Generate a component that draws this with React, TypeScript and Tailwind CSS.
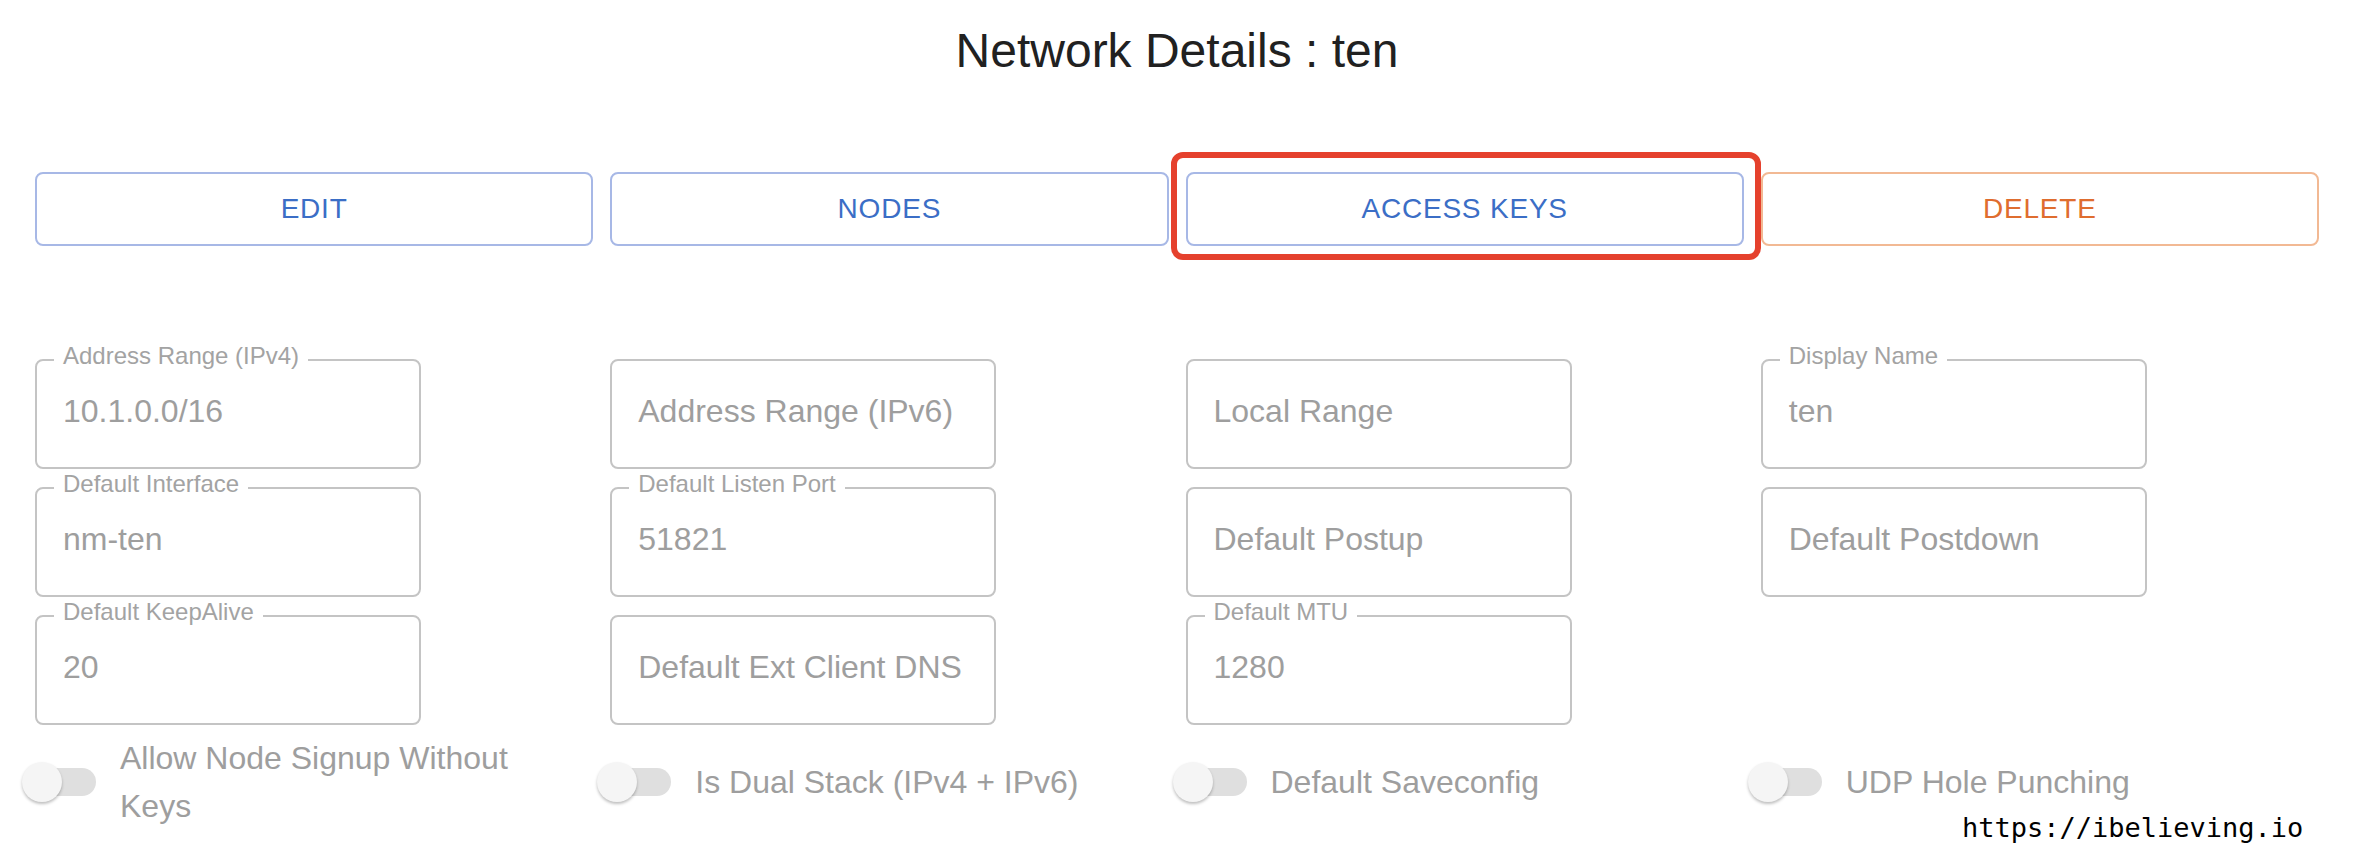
import React from 'react';

type FieldProps = {
  label?: string;
  value?: string;
  placeholder?: string;
};

const Field: React.FC<FieldProps> = ({ label, value, placeholder }) => {
  return (
    <div className="relative w-[386px] h-[110px] rounded-[8px] border-2 border-[#c4c4c4] flex items-center px-[26px] pb-[6px]">
      {label && (
        <span className="absolute left-[17px] -top-[17px] px-[9px] bg-white text-[24px] leading-[24px] text-[#a3a3a3] whitespace-nowrap">
          {label}
        </span>
      )}
      <span className="text-[32px] leading-[40px] text-[#9e9e9e] whitespace-nowrap">
        {value ?? placeholder}
      </span>
    </div>
  );
};

const Toggle: React.FC<{ label: string; wrap?: boolean }> = ({ label, wrap }) => {
  return (
    <div className="flex items-center">
      <div className="relative w-[74px] h-[40px] -ml-[13px] shrink-0">
        <div className="absolute left-[6px] top-[6px] w-[68px] h-[28px] rounded-full bg-[#dfdfdf]" />
        <div className="absolute left-0 top-0 w-[40px] h-[40px] rounded-full bg-[#f5f5f5] shadow-[0_2px_3px_rgba(0,0,0,0.25)]" />
      </div>
      <span
        className={`ml-[24px] text-[32px] leading-[48px] text-[#9e9e9e] ${wrap ? 'max-w-[420px]' : 'whitespace-nowrap'}`}
      >
        {label}
      </span>
    </div>
  );
};

const buttons = [
  { name: 'Edit', tone: 'blue' },
  { name: 'Nodes', tone: 'blue' },
  { name: 'Access Keys', tone: 'blue' },
  { name: 'Delete', tone: 'orange' },
];

export default function App() {
  return (
    <div className="relative min-h-[862px] bg-white font-['Liberation_Sans',Arial,sans-serif]">
      {/* Title */}
      <h1 className="pt-[23px] text-center text-[48px] leading-[56px] font-normal text-[#212121]">
        Network Details : ten
      </h1>

      {/* Action buttons */}
      <div className="mt-[93px] px-[35px] grid grid-cols-4 gap-[17px]">
        {buttons.map((b) => (
          <button
            key={b.name}
            className={`h-[74px] rounded-[8px] border-2 bg-white text-[28px] tracking-[0.8px] uppercase ${
              b.tone === 'blue'
                ? 'border-[#a7b8e6] text-[#3b6ec6]'
                : 'border-[#f2b994] text-[#df6d2f]'
            }`}
          >
            {b.name}
          </button>
        ))}
      </div>

      {/* Fields */}
      <div className="mt-[113px] px-[35px] grid grid-cols-4 gap-[17px] items-start">
        <div className="flex flex-col gap-[18px]">
          <Field label="Address Range (IPv4)" value="10.1.0.0/16" />
          <Field label="Default Interface" value="nm-ten" />
          <Field label="Default KeepAlive" value="20" />
        </div>
        <div className="flex flex-col gap-[18px]">
          <Field placeholder="Address Range (IPv6)" />
          <Field label="Default Listen Port" value="51821" />
          <Field placeholder="Default Ext Client DNS" />
        </div>
        <div className="flex flex-col gap-[18px]">
          <Field placeholder="Local Range" />
          <Field placeholder="Default Postup" />
          <Field label="Default MTU" value="1280" />
        </div>
        <div className="flex flex-col gap-[18px]">
          <Field label="Display Name" value="ten" />
          <Field placeholder="Default Postdown" />
        </div>
      </div>

      {/* Switches */}
      <div className="mt-[9px] px-[35px] grid grid-cols-4 gap-[17px] items-center">
        <Toggle label="Allow Node Signup Without Keys" wrap />
        <Toggle label="Is Dual Stack (IPv4 + IPv6)" />
        <Toggle label="Default Saveconfig" />
        <Toggle label="UDP Hole Punching" />
      </div>

      {/* Highlight around ACCESS KEYS */}
      <div className="absolute left-[1171px] top-[152px] w-[590px] h-[108px] rounded-[12px] border-[6px] border-[#e5412d] pointer-events-none" />

      {/* Watermark */}
      <div className="absolute left-[1962px] top-[812px] text-[27px] leading-[32px] text-black font-['DejaVu_Sans_Mono',monospace]">
        https://ibelieving.io
      </div>
    </div>
  );
}
